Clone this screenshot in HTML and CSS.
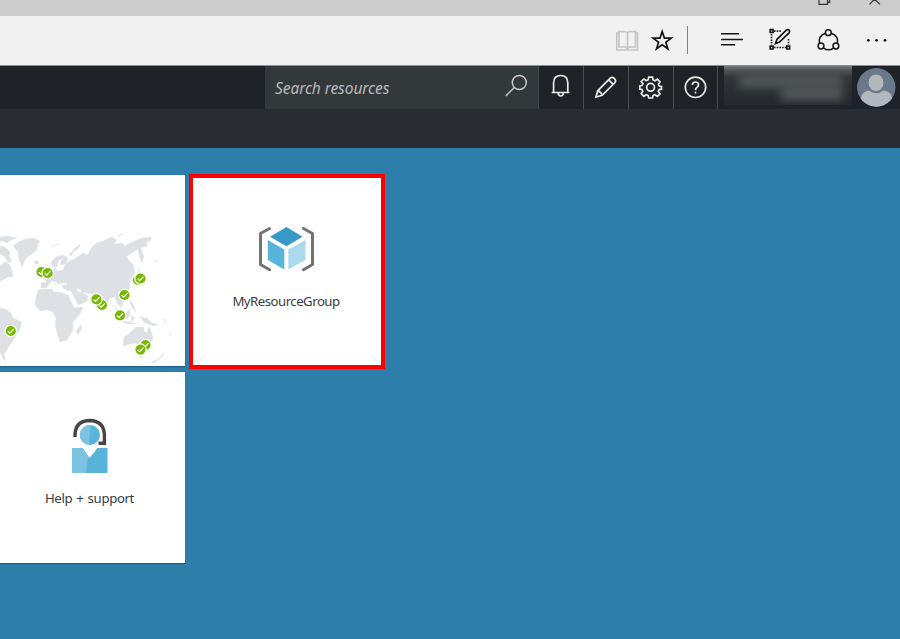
FILE: index.html
```html
<!DOCTYPE html>
<html lang="en">
<head>
<meta charset="utf-8">
<title>Portal dashboard</title>
<link rel="stylesheet" href="styles.css">
</head>
<body>
<div class="titlebar">
  <svg width="100" height="15" viewBox="800 0 100 15"><path d="M819 0V4.300H827.500V0M827.500 2.300H829.700V0M869.500 4.300L874.500-.7L880 4.300"/></svg>
</div>
<div class="toolbar">
  <svg class="reading" width="24" height="24" viewBox="615 28 24 24"><path d="M627.500 32.500V48M619 31.500H624.500Q627 31.500 627.500 33Q628 31.500 630.500 31.500H635.500V47H630.500Q628 47 627.500 48.500Q627 47 624.500 47H619ZM619 33H616.800V50H637.500V33H635.500"/></svg>
  <svg class="star" width="24" height="24" viewBox="650 28 24 24"><path d="M662.200 31.500L664.400 38.100H671.200L665.800 42.200L667.900 48.800L662.200 44.900L656.500 48.800L658.600 42.200L653.200 38.100H660Z"/></svg>
  <span class="divider"></span>
  <svg class="hub" width="28" height="24" viewBox="718 28 28 24"><path d="M721 33.700H739M721 39.400H743M721 44.700H735"/></svg>
  <svg class="note" width="26" height="26" viewBox="767 27 26 26"><path class="dots" d="M774 31.200H782M771.500 34V45M774 47.500H786M788.500 39V45"/><path d="M770.200 29.700H773V32.500H770.200ZM770.200 46.200H773V49H770.200ZM786.800 46.200H789.600V49H786.800Z"/><path d="M775.500 43.500L777 39.300L786.500 30Q788 29 789.200 30.200Q790.200 31.500 789 32.800L779.500 42.100Z"/></svg>
  <svg class="share" width="28" height="26" viewBox="815 27 28 26"><circle cx="828.300" cy="32.700" r="2.900"/><circle cx="821" cy="46" r="2.900"/><circle cx="835.900" cy="46" r="2.900"/><path d="M825.500 33.200Q817.800 36 819.600 43.500M831.200 33.200Q839 36 837.300 43.500M823.600 48.100Q828.500 51.500 833.500 48.100"/></svg>
  <svg class="more" width="26" height="24" viewBox="864 28 26 24"><circle cx="868.300" cy="40.300" r="1.400"/><circle cx="876.600" cy="40.300" r="1.400"/><circle cx="885" cy="40.300" r="1.400"/></svg>
</div>
<header class="header">
  <div class="search"><span>Search resources</span>
    <svg width="26" height="26" viewBox="503 73 26 26"><circle cx="519.300" cy="82.500" r="7"/><path d="M514.300 87.500L505.800 96"/></svg>
  </div>
  <div class="cell"><svg width="44" height="43" viewBox="539 66 44 43"><path d="M551.700 92.500H569.500M553.600 92V83Q553.600 75.500 560.700 75.500Q567.800 75.500 567.800 83V92M558.200 93Q558.500 96 560.800 96Q563.200 96 563.300 93"/></svg></div>
  <div class="cell"><svg width="44" height="43" viewBox="584 66 44 43"><path d="M596 97L597.700 90.800L610.500 78Q612.200 76.600 614.300 78.500Q616.500 80.700 615 82.500L602.200 95.300ZM597.700 90.800Q601 91.500 602.200 95.300M608.700 79.800L613.200 84.300"/></svg></div>
  <div class="cell"><svg width="44" height="43" viewBox="629 66 44 43"><circle cx="650.600" cy="87.300" r="3.900"/><path d="M648.700 77.200H652.500L653 80L655 80.800L657.300 79.200L660 81.900L658.400 84.200L659.200 86L661.500 86.400V89.200L659.200 89.600L658.300 91.500L660 93.800L657.300 96.300L655 94.700L653 95.500L652.500 98H648.700L648.200 95.500L646.200 94.700L643.900 96.300L641.200 93.600L642.800 91.300L642 89.500L639.800 89.200V86L642 85.600L642.900 83.700L641.200 81.500L643.900 79L646.200 80.600L648.200 79.800Z"/></svg></div>
  <div class="cell"><svg width="44" height="43" viewBox="674 66 44 43"><circle cx="695.500" cy="87.300" r="10.200"/><path d="M692.400 85Q692.400 82 695.500 82Q698.500 82 698.500 84.700Q698.500 86.300 697 87.400Q695.500 88.400 695.500 90.300M695.500 91.800V93.500"/></svg></div>
  <div class="account"><i class="smudge first"></i><i class="smudge second"></i></div>
  <svg class="avatar" width="40" height="40" viewBox="856 67 40 40"><defs><clipPath id="face"><circle cx="876.300" cy="87.400" r="19.300"/></clipPath></defs><g clip-path="url(#face)"><circle cx="876.300" cy="87.400" r="19.500" fill="#69788b"/><path d="M861 108V98Q862 91 869 90.500Q876.500 96 883.500 90.500Q891 91 892 98V108Z" fill="#b3b8bd"/><ellipse cx="876" cy="82.700" rx="8" ry="8.800" fill="#b3b8bd" stroke="#69788b"/></g></svg>
</header>
<div class="subbar"></div>
<main class="board">
  <section class="tile map">
    <svg width="185" height="191" viewBox="0 175 185 191">
      <g class="land">
        <path d="M13 246L18 242L25 239L34 238L40 241L38 244L37 250L30 255L26 258L22 267L19 260L18 252ZM0 237L8 236L17 238L11 240L7 243L2 241L0 242ZM0 246L5 247L10 252L9 256L12 261L8 263L5 257L0 254ZM0 265L6 262L10 265L12 271L13 277L8 277L3 280L0 281ZM34 261L38 261L39 264L35 264Z"/>
        <path d="M0 308L5 309L11 313L13 318L22 322L20 329L16 335L13 341L9 346L7 350L4 354L6 361L3 359L0 352Z"/>
        <path d="M38 290L43 289L52 289L54 292L60 292L68 295L70 299L74 308L83 307L80 314L73 322L73 330L67 340L60 342L57 333L55 325L56 319L53 312L47 310L40 311L35 305L36 297ZM76 331L82 324L81 330L78 335Z"/>
        <path d="M41 288L41 283L46 282L45 278L50 274L53 272L55 267L57 271L63 270L65 264L60 265L62 258L58 261L57 267L52 267L51 262L56 257L63 255L68 258L66 263L71 260L76 258L83 253L88 255L91 248L97 243L103 241L112 237L117 240L114 244L122 243L125 246L132 242L142 238L151 237L151 240L146 243L148 246L141 248L144 257L142 263L139 256L138 249L132 253L127 256L129 261L133 264L135 273L133 278L129 280L130 286L128 293L122 298L123 303L121 308L117 303L115 297L109 298L108 306L105 307L101 298L97 297L91 294L82 292L88 296L87 301L79 305L76 302L71 292L64 289L60 283L57 286L53 283L46 288Z"/>
        <path d="M69 255L75 248L80 244L79 248L73 252L72 256ZM45 268L50 267L51 273L46 274ZM133 284L138 281L139 269L137 266L141 274L140 281L134 286ZM129 299L133 304L136 312L132 308ZM115 306L119 313L122 320L117 316ZM125 314L130 309L130 316L126 319ZM120 321L130 322L136 324L127 324ZM131 316L135 317L132 322ZM140 317L147 318L152 323L158 324L153 326L145 323ZM124 337L129 334L136 327L144 327L144 331L147 333L149 326L153 337L150 347L145 350L141 345L134 343L123 346ZM140 354L144 354L141 358ZM158 359L164 353L163 356L154 363L152 362ZM100 307L103 308L101 311Z"/>
      </g>
      <path class="sea" d="M49 286L52 282L56 283L58 287M61 284L67 284M70 291L77 305M77 289L81 292"/>
      <path class="islands" d="M52 246L59 244M118 236L123 234M155 260L158 262M163 319L166 323M169 335L171 334"/>
      <defs><g id="check"><circle r="5.700"/><path d="M-2.900.1L-.8 2.100L3-1.900"/></g></defs>
      <g class="checks"><use href="#check" x="41.500" y="272"/><use href="#check" x="47.700" y="273"/><use href="#check" x="10.800" y="331"/><use href="#check" x="138" y="280"/><use href="#check" x="140.500" y="278.500"/><use href="#check" x="124.500" y="295"/><use href="#check" x="102" y="305"/><use href="#check" x="96.400" y="299.300"/><use href="#check" x="120" y="315.400"/><use href="#check" x="145.500" y="345"/><use href="#check" x="140.500" y="349.600"/></g>
    </svg>
  </section>
  <section class="tile group">
    <svg width="60" height="50" viewBox="256 224 60 50"><path d="M286.500 227L302.500 236.800L286.500 246.300L270 236.800Z" fill="#3999c6"/><path d="M267.800 240L284.300 249.500V269.500L267.800 260Z" fill="#59b4d9"/><path d="M305.500 240L288.300 249.500V269.500L305.500 260Z" fill="#acd9ec"/><path d="M269.500 228.500L260.500 233.500V264.500L269.500 269.700M303.500 228.500L312.500 233.500V264.500L303.500 269.700" fill="none" stroke="#737373" stroke-width="3" stroke-linecap="round" stroke-linejoin="round"/></svg>
    <span class="label">MyResourceGroup</span>
  </section>
  <section class="tile help">
    <svg width="40" height="58" viewBox="70 417 40 58"><path d="M75 437V434Q76 420.500 90 420.500Q103.500 421 104.400 434V443.300H98.500" fill="none" stroke="#454545" stroke-width="3.400"/><circle cx="90" cy="435" r="10" fill="#59b4d9"/><path d="M90.500 425A10 10 0 0 0 89 445Z" fill="#7bc3e1"/><path d="M72 448H82.500L89.500 458L97.500 448H107.500V473H72Z" fill="#59b4d9"/><path d="M72 448H82.500L88 456L86 473H72Z" fill="#7bc3e1"/></svg>
    <span class="label">Help + support</span>
  </section>
</main>
</body>
</html>
```
FILE: styles.css
```css
* { box-sizing: border-box; }
body { margin: 0; height: 639px; overflow: hidden; background: #2d7ea9; font-family: "Noto Sans", "Open Sans", sans-serif; }
svg { display: block; flex: none; }
.titlebar { height: 16px; background: #ccc; display: flex; justify-content: flex-end; }
.titlebar svg { fill: none; stroke: #333; stroke-width: 1.2; }
.toolbar { height: 50px; background: #f1f1f1; border-bottom: 1px solid #8c9091; display: flex; align-items: flex-start; padding: 12px 10px 0 615px; }
.toolbar svg { fill: none; stroke: #151515; stroke-width: 1.5; }
.toolbar .reading { stroke: #c3c3c3; }
.star { margin-left: 11px; }
.toolbar .star { stroke-width: 1.7; }
.divider { width: 1px; height: 28px; margin: -2px 30px 0 13px; background: #808080; }
.note { margin: -1px 0 0 21px; }
.toolbar .note { stroke-width: 1.7; }
.note .dots { stroke-dasharray: 1.5 1.2; }
.share { margin: -1px 0 0 22px; }
.toolbar .more { margin-left: 21px; fill: #151515; stroke: none; }
.header { height: 43px; background: #1f2327; display: flex; padding-left: 265px; }
.search { width: 274px; background: #33383b; border-right: 1px solid #464b4e; color: #b8bbbd; display: flex; align-items: flex-start; justify-content: space-between; padding: 7px 9px 0 10px; }
.search span { font-size: 15.5px; line-height: 30px; font-style: italic; letter-spacing: -.08px; white-space: nowrap; }
.search svg { fill: none; stroke: #c7c9ca; stroke-width: 1.5; }
.cell { width: 45px; border-right: 1px solid #4a4e51; flex: none; }
.cell:nth-of-type(5) { width: 44px; }
.cell svg { fill: none; stroke: #e8e9e9; stroke-width: 1.7; }
.account { width: 128px; height: 39px; margin-left: 6px; overflow: hidden; background: linear-gradient(#777a7b 0, #4b4f51 5px, #303437 12px, #25292c 100%); display: grid; grid-template-rows: 12px 13px; justify-items: end; padding: 9px 10px 0 0; }
.smudge { background: #565a5c; filter: blur(5px); }
.first { width: 103px; }
.second { width: 61px; }
.avatar { margin: 1px 0 0 4px; }
.subbar { height: 39px; background: #292d31; }
.board { padding-top: 27px; display: grid; grid-template-columns: 185px 188px; grid-template-rows: 191px 191px; gap: 6px 9px; }
.tile { background: #fff; display: flex; flex-direction: column; align-items: center; box-shadow: 0 1px 1px #1b618b; }
.group { width: 196px; height: 195px; margin: -1px 0 0 -5px; border: 4px solid #f00; padding: 46px 2px 0 0; box-shadow: none; }
.group svg { margin-left: -1px; }
.help { padding: 45px 6px 0 0; }
.help svg { margin-left: 1px; }
.label { font-size: 13.2px; line-height: 20px; color: #383b3f; white-space: nowrap; }
.group .label { margin-top: 17px; letter-spacing: -.5px; }
.help .label { margin-top: 13px; letter-spacing: -.35px; word-spacing: 1px; }
.land { fill: #dde0e5; stroke: #e4e6ea; stroke-width: .6; stroke-dasharray: 1.5 1; }
.sea { fill: none; stroke: #fff; stroke-width: 1.7; }
.islands { fill: none; stroke: #e4e6ea; stroke-width: 1.5; stroke-dasharray: 2 1; }
.checks { fill: #76b900; stroke: #fff; stroke-width: 1.2; }
```
